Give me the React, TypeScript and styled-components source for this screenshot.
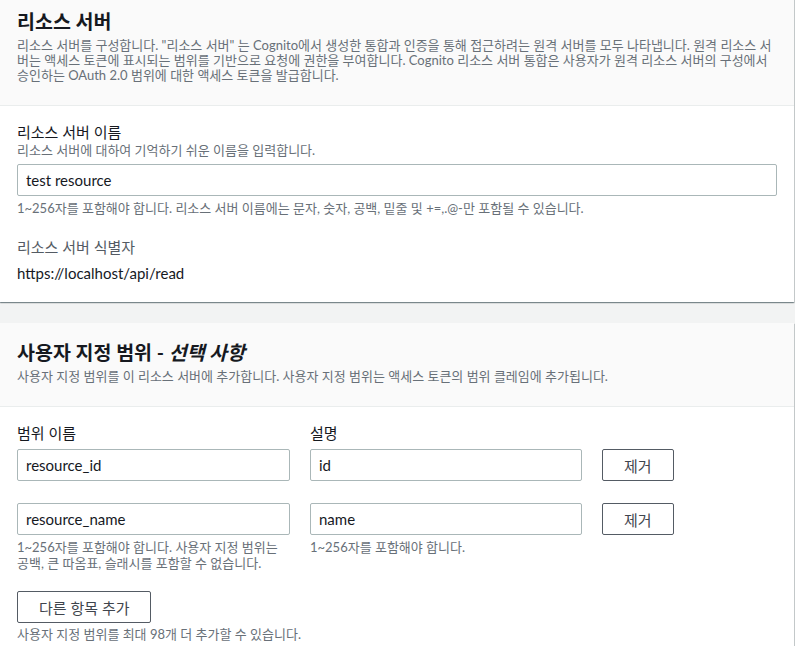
import React from "react";
import styled, { createGlobalStyle } from "styled-components";

const GlobalStyle = createGlobalStyle`
  html, body {
    margin: 0;
    padding: 0;
    background: #f2f3f3;
  }
  body {
    font-family: Lato, "Noto Sans CJK KR", sans-serif;
    color: #16191f;
    overflow: hidden;
  }
  * {
    box-sizing: border-box;
  }
`;

const Page = styled.div`
  display: flex;
  flex-direction: column;
  gap: 21px;
  margin-top: -8px; // page is scrolled a little
  padding-right: 1px;
`;

const Panel = styled.section`
  background: #ffffff;
  box-shadow: 0 1px 1px 0 rgba(0, 28, 36, 0.3),
    1px 1px 1px 0 rgba(0, 28, 36, 0.15), -1px 1px 1px 0 rgba(0, 28, 36, 0.15);
`;

const PanelHeader = styled.header`
  background: #fafafa;
  border-bottom: 1px solid #eaeded;
  padding: 18px 17px 22px;

  h2 {
    margin: 0;
    font-size: 19.5px;
    line-height: 24px;
    font-weight: 700;
    color: #16191f;

    i {
      font-style: italic;
    }
  }

  p {
    margin: 4px 0 0;
    font-size: 13px;
    line-height: 15px;
    color: #687078;
  }
`;

const PanelBody = styled.div`
  padding: 16px 17px 19px;
`;

const Field = styled.div<{ $spaced?: boolean }>`
  display: flex;
  flex-direction: column;
  margin-top: ${(props) => (props.$spaced ? "21px" : "0")};
`;

const Label = styled.div<{ $muted?: boolean }>`
  font-size: 15px;
  line-height: 20px;
  color: ${(props) => (props.$muted ? "#545b64" : "#16191f")};
`;

const Description = styled.div`
  font-size: 13px;
  line-height: 16px;
  color: #687078;
`;

const Hint = styled.div`
  font-size: 13px;
  line-height: 16px;
  color: #687078;
  margin-top: 4px;
`;

const Value = styled.div`
  font-size: 15px;
  line-height: 20px;
  margin-top: 6px;
  color: #16191f;
`;

const Input = styled.input<{ $top?: number }>`
  display: block;
  width: 100%;
  height: 32px;
  margin-top: ${(props) => props.$top ?? 0}px;
  padding: 0 8px;
  border: 1px solid #aab7b8;
  border-radius: 2px;
  background: #ffffff;
  font-family: inherit;
  font-size: 15px;
  color: #16191f;
  outline: none;
`;

const ScopeGrid = styled.div`
  display: grid;
  grid-template-columns: 273px 272px max-content;
  column-gap: 20px;
  align-items: start;
`;

const ScopeLabel = styled(Label)`
  margin-bottom: 6px;
`;

const ScopeRow = styled.div<{ $gap?: number }>`
  display: contents;

  & > * {
    margin-top: ${(props) => props.$gap ?? 0}px;
  }
`;

const Cell = styled.div`
  display: flex;
  flex-direction: column;
`;

const Button = styled.button`
  height: 32px;
  padding: 0 21px;
  border: 1px solid #545b64;
  border-radius: 2px;
  background: #ffffff;
  color: #3f454d;
  font-family: inherit;
  font-size: 15px;
  cursor: pointer;
  white-space: nowrap;
`;

const Footer = styled.div`
  display: flex;
  flex-direction: column;
  align-items: flex-start;
  margin-top: 20px;

  ${Hint} {
    margin-top: 3px;
  }
`;

const scopes = [
  { name: "resource_id", description: "id" },
  { name: "resource_name", description: "name" },
];

const App = () => {
  return (
    <>
      <GlobalStyle />
      <Page>
        <Panel>
          <PanelHeader>
            <h2>리소스 서버</h2>
            <p>
              리소스 서버를 구성합니다. "리소스 서버" 는 Cognito에서 생성한
              통합과 인증을 통해 접근하려는 원격 서버를 모두 나타냅니다. 원격
              리소스 서버는 액세스 토큰에 표시되는 범위를 기반으로 요청에 권한을
              부여합니다. Cognito 리소스 서버 통합은 사용자가 원격 리소스 서버의
              구성에서 승인하는 OAuth 2.0 범위에 대한 액세스 토큰을 발급합니다.
            </p>
          </PanelHeader>
          <PanelBody>
            <Field>
              <Label>리소스 서버 이름</Label>
              <Description>리소스 서버에 대하여 기억하기 쉬운 이름을 입력합니다.</Description>
              <Input $top={6} defaultValue="test resource" />
              <Hint>
                1~256자를 포함해야 합니다. 리소스 서버 이름에는 문자, 숫자, 공백,
                밑줄 및 +=,.@-만 포함될 수 있습니다.
              </Hint>
            </Field>
            <Field $spaced>
              <Label $muted>리소스 서버 식별자</Label>
              <Value>https://localhost/api/read</Value>
            </Field>
          </PanelBody>
        </Panel>

        <Panel>
          <PanelHeader>
            <h2>
              사용자 지정 범위 - <i>선택 사항</i>
            </h2>
            <p>
              사용자 지정 범위를 이 리소스 서버에 추가합니다. 사용자 지정 범위는
              액세스 토큰의 범위 클레임에 추가됩니다.
            </p>
          </PanelHeader>
          <PanelBody>
            <ScopeGrid>
              <ScopeLabel>범위 이름</ScopeLabel>
              <ScopeLabel>설명</ScopeLabel>
              <div />
              {scopes.map((scope, index) => {
                const last = index === scopes.length - 1;
                return (
                  <ScopeRow key={scope.name} $gap={index === 0 ? 0 : 22}>
                    <Cell>
                      <Input defaultValue={scope.name} />
                      {last && (
                        <Hint>
                          1~256자를 포함해야 합니다. 사용자 지정 범위는 공백, 큰
                          따옴표, 슬래시를 포함할 수 없습니다.
                        </Hint>
                      )}
                    </Cell>
                    <Cell>
                      <Input defaultValue={scope.description} />
                      {last && <Hint>1~256자를 포함해야 합니다.</Hint>}
                    </Cell>
                    <Cell>
                      <Button>제거</Button>
                    </Cell>
                  </ScopeRow>
                );
              })}
            </ScopeGrid>
            <Footer>
              <Button>다른 항목 추가</Button>
              <Hint>사용자 지정 범위를 최대 98개 더 추가할 수 있습니다.</Hint>
            </Footer>
          </PanelBody>
        </Panel>
      </Page>
    </>
  );
};

export default App;
